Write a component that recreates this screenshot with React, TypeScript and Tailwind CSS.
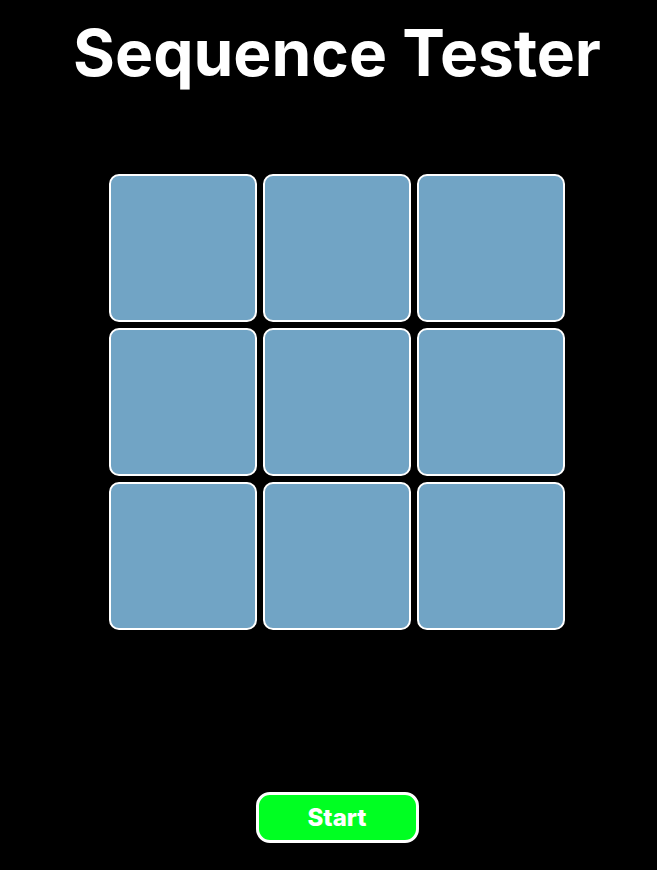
const tiles = Array.from({ length: 9 }, (_, i) => i);

export default function App() {
  return (
    <div className="min-h-[870px] bg-black pl-[17px] font-['Inter','Liberation_Sans',sans-serif]">
      <div className="flex flex-col items-center">
        <h1 className="mt-[17px] text-[64px] font-bold leading-[72px] text-white">Sequence Tester</h1>

        <div className="mt-[85px] grid grid-cols-[repeat(3,148px)] gap-[6px]">
          {tiles.map((t) => (
            <button
              key={t}
              type="button"
              className="h-[148px] w-[148px] rounded-[10px] border-2 border-white bg-[#71a4c5]"
            />
          ))}
        </div>

        <button
          type="button"
          className="mt-[162px] flex h-[51px] w-[163px] items-center justify-center rounded-[14px] border-[3px] border-white bg-[#00ff22] text-[24px] font-extrabold text-white"
        >
          Start
        </button>
      </div>
    </div>
  );
}
